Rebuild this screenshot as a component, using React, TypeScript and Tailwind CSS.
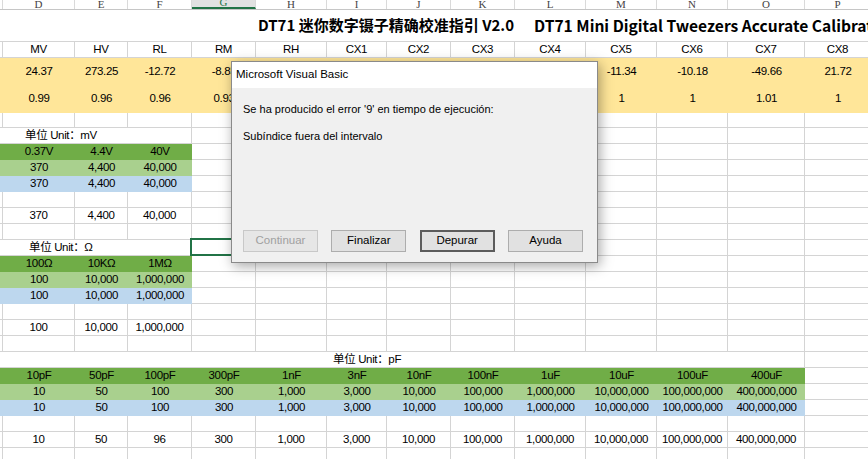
import clsx from 'clsx';

// column widths C..P (C is only a sliver at the left edge)
const W = [3, 72, 53, 64, 64, 71, 60, 64, 64, 71, 71, 71, 77, 66];
const LETTERS = ['', 'D', 'E', 'F', 'G', 'H', 'I', 'J', 'K', 'L', 'M', 'N', 'O', 'P'];

type Cell = { t?: string; span?: number; bg?: string; pad?: string; sel?: boolean };

const rest = (n: number): Cell[] => Array.from({ length: n }, () => ({}));
const band = (bg: string, vals: string[]): Cell[] => [
  { bg },
  ...vals.map((t) => ({ t, bg })),
  ...rest(13 - vals.length),
];

const GREEN = 'bg-[#70ad47]';
const LIGHT = 'bg-[#a9d08e]';
const BLUE = 'bg-[#bdd7ee]';
const YELLOW = 'bg-[#ffe699]';

function Row({ h, cells }: { h: string; cells: Cell[] }) {
  let i = 0;
  return (
    <div className={clsx('flex', h)}>
      {cells.map((c, k) => {
        const span = c.span ?? 1;
        const w = W.slice(i, i + span).reduce((a, b) => a + b, 0);
        i += span;
        return (
          <div
            key={k}
            style={{ width: w }}
            className={clsx(
              'shrink-0 h-full flex items-center whitespace-nowrap overflow-hidden',
              c.pad ? ['justify-start', c.pad] : 'justify-center',
              c.bg ? c.bg : 'border-r border-b border-[#d4d4d4]',
              c.sel && 'relative overflow-visible'
            )}
          >
            {c.t}
            {c.sel && <div className="absolute -left-[2px] -top-[2px] -right-[1px] -bottom-[1px] border-2 border-[#217346]" />}
          </div>
        );
      })}
    </div>
  );
}

const PF_HEAD = ['10pF', '50pF', '100pF', '300pF', '1nF', '3nF', '10nF', '100nF', '1uF', '10uF', '100uF', '400uF'];
const PF_VALS = ['10', '50', '100', '300', '1,000', '3,000', '10,000', '100,000', '1,000,000', '10,000,000', '100,000,000', '400,000,000'];
const PF_MEAS = ['10', '50', '96', '300', '1,000', '3,000', '10,000', '100,000', '1,000,000', '10,000,000', '100,000,000', '400,000,000'];

function ColumnHeader() {
  return (
    <div className="flex h-[10px] border-b border-[#c6c6c6] font-['Liberation_Serif',serif] text-[11px] text-[#444] leading-[9px] tracking-normal">
      {LETTERS.map((l, k) => (
        <div
          key={k}
          style={{ width: W[k] }}
          className={clsx(
            'shrink-0 h-full flex justify-center items-end overflow-hidden border-r border-[#dadada]',
            l === 'G' && 'bg-[#e1e1e1] text-[#217346] border-b-2 border-b-[#217346]'
          )}
        >
          {l}
        </div>
      ))}
    </div>
  );
}

function Btn({ label, kind }: { label: string; kind?: 'off' | 'def' }) {
  return (
    <div
      className={clsx(
        'w-[75px] h-[22px] flex items-center justify-center',
        kind === 'off' && 'bg-[#e6e6e6] border border-[#c8c8c8] text-[#a0a0a0]',
        kind === 'def' && 'bg-[#e1e1e1] border-2 border-[#5c5c5c]',
        !kind && 'bg-[#e1e1e1] border border-[#adadad]'
      )}
    >
      {label}
    </div>
  );
}

function ErrorDialog() {
  return (
    <div className="absolute left-[231px] top-[61px] w-[367px] h-[202px] flex flex-col border border-[#8a8a8a] bg-[#f0f0f0] shadow-[2px_3px_12px_rgba(0,0,0,0.35)] font-['Liberation_Sans',sans-serif] text-[11px] tracking-normal text-black">
      <div className="h-[26px] bg-white flex items-center pl-[4px] text-[11.5px]">Microsoft Visual Basic</div>
      <div className="flex-1 flex flex-col px-[11px] pt-[12px]">
        <p className="leading-[18px]">Se ha producido el error '9' en tiempo de ejecución:</p>
        <p className="leading-[18px] mt-[9px]">Subíndice fuera del intervalo</p>
      </div>
      <div className="flex justify-between pl-[11px] pr-[14px] pb-[10px] text-[11.5px]">
        <Btn label="Continuar" kind="off" />
        <Btn label="Finalizar" />
        <Btn label="Depurar" kind="def" />
        <Btn label="Ayuda" />
      </div>
    </div>
  );
}

export default function App() {
  return (
    <div className="relative w-[868px] h-[459px] overflow-hidden bg-white text-black font-['Liberation_Sans','Noto_Sans_CJK_SC',sans-serif] text-[11.5px] tracking-[-0.35px]">
      <ColumnHeader />

      {/* merged title row */}
      <div className="h-8 flex items-center pl-[258px] border-b border-[#d4d4d4] whitespace-nowrap font-['Noto_Sans_CJK_SC',sans-serif] font-bold text-[15px] tracking-normal">
        <span>DT71 迷你数字镊子精确校准指引 V2.0</span>
        <span className="ml-[20px] text-[15.6px]">DT71 Mini Digital Tweezers Accurate Calibration Guide V2.0</span>
      </div>

      <Row h="h-4" cells={[{}, ...['MV', 'HV', 'RL', 'RM', 'RH', 'CX1', 'CX2', 'CX3', 'CX4', 'CX5', 'CX6', 'CX7', 'CX8'].map((t) => ({ t }))]} />
      <Row h="h-[27px]" cells={band(YELLOW, ['24.37', '273.25', '-12.72', '-8.85', '', '', '', '', '', '-11.34', '-10.18', '-49.66', '21.72'])} />
      <Row h="h-[28px]" cells={band(YELLOW, ['0.99', '0.96', '0.96', '0.93', '', '', '', '', '', '1', '1', '1.01', '1'])} />
      <Row h="h-[15px]" cells={rest(14)} />

      {/* mV table */}
      <Row h="h-4" cells={[{ span: 4, t: '单位 Unit：mV', pad: 'pl-[25px]' }, ...rest(10)]} />
      <Row h="h-4" cells={band(GREEN, ['0.37V', '4.4V', '40V'])} />
      <Row h="h-4" cells={band(LIGHT, ['370', '4,400', '40,000'])} />
      <Row h="h-4" cells={band(BLUE, ['370', '4,400', '40,000'])} />
      <Row h="h-4" cells={rest(14)} />
      <Row h="h-4" cells={[{}, { t: '370' }, { t: '4,400' }, { t: '40,000' }, ...rest(10)]} />
      <Row h="h-4" cells={rest(14)} />

      {/* Ω table */}
      <Row h="h-4" cells={[{ span: 4, t: '单位 Unit：Ω', pad: 'pl-[29px]' }, { sel: true }, ...rest(9)]} />
      <Row h="h-4" cells={band(GREEN, ['100Ω', '10KΩ', '1MΩ'])} />
      <Row h="h-4" cells={band(LIGHT, ['100', '10,000', '1,000,000'])} />
      <Row h="h-4" cells={band(BLUE, ['100', '10,000', '1,000,000'])} />
      <Row h="h-4" cells={rest(14)} />
      <Row h="h-4" cells={[{}, { t: '100' }, { t: '10,000' }, { t: '1,000,000' }, ...rest(10)]} />
      <Row h="h-4" cells={rest(14)} />

      {/* pF table */}
      <Row h="h-4" cells={[{ span: 13, t: '单位 Unit：pF', pad: 'pl-[333px]' }, {}]} />
      <Row h="h-4" cells={band(GREEN, PF_HEAD)} />
      <Row h="h-4" cells={band(LIGHT, PF_VALS)} />
      <Row h="h-4" cells={band(BLUE, PF_VALS)} />
      <Row h="h-4" cells={rest(14)} />
      <Row h="h-4" cells={[{}, ...PF_MEAS.map((t) => ({ t })), {}]} />
      <Row h="h-4" cells={rest(14)} />

      <ErrorDialog />
    </div>
  );
}
